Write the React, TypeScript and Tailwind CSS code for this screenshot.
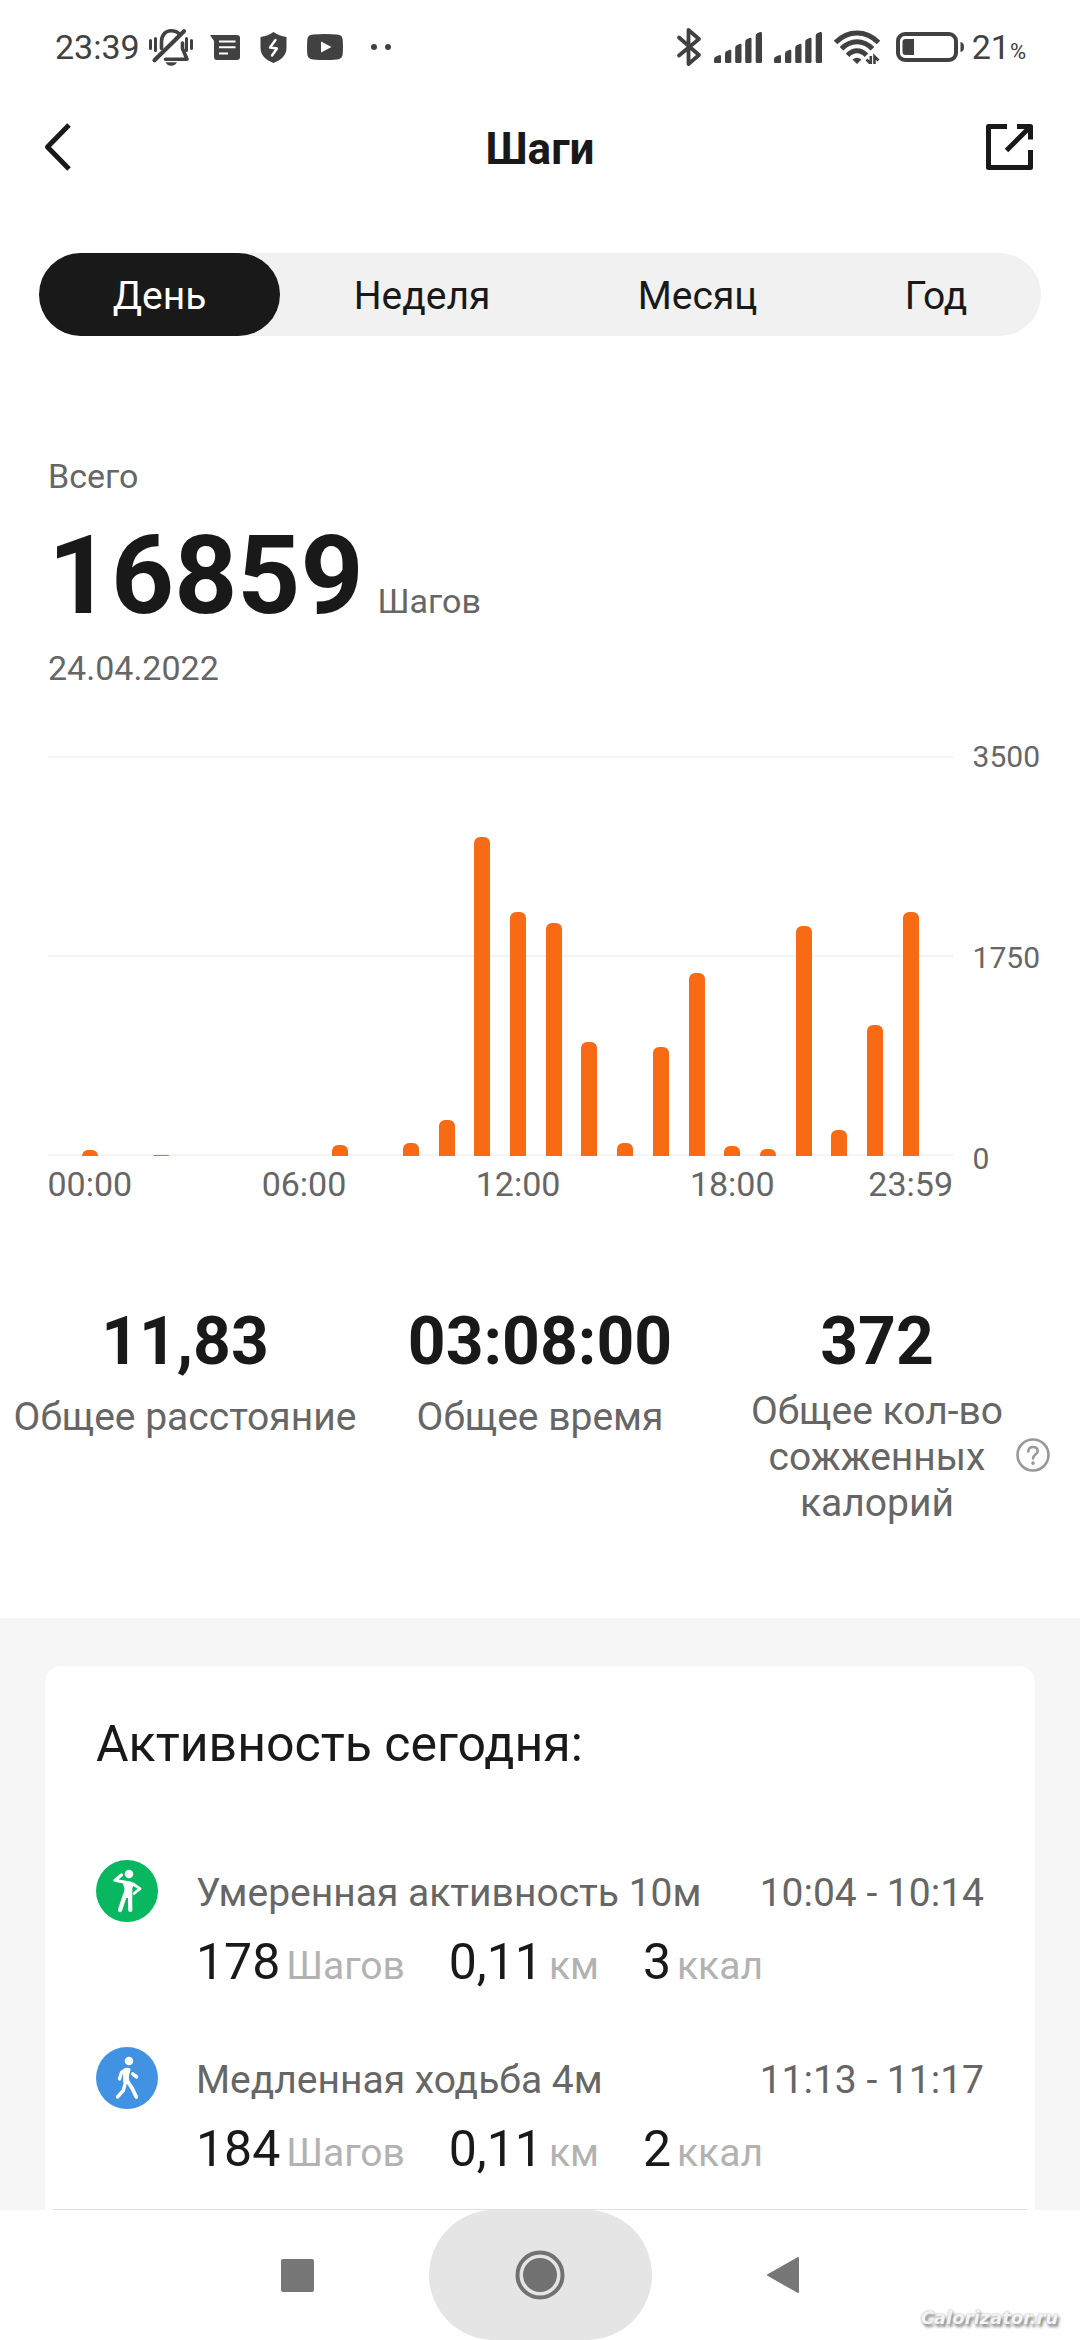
import { useState } from "react";

const tabs = ["День", "Неделя", "Месяц", "Год"];

const MAX_STEPS = 3500;

const hours = [
  53, 0, 13, 0, 0, 0, 0, 96, 0, 110, 316, 2794, 2132, 2035, 1000, 110, 956, 1605, 88, 61, 2009, 228,
  1149, 2132,
];

const hourLabels: Record<number, string> = {
  0: "00:00",
  6: "06:00",
  12: "12:00",
  18: "18:00",
  23: "23:59",
};

const activities = [
  {
    icon: StandingIcon,
    title: "Умеренная активность 10м",
    time: "10:04 - 10:14",
    values: [
      ["178", "Шагов"],
      ["0,11", "км"],
      ["3", "ккал"],
    ],
  },
  {
    icon: WalkingIcon,
    title: "Медленная ходьба 4м",
    time: "11:13 - 11:17",
    values: [
      ["184", "Шагов"],
      ["0,11", "км"],
      ["2", "ккал"],
    ],
  },
];

function StandingIcon() {
  return (
    <svg viewBox="0 0 62 62" className="size-[62px] shrink-0" aria-hidden="true">
      <circle cx="31" cy="31" r="31" fill="#07b860" />
      <circle cx="33" cy="14" r="4.3" fill="#fff" />
      <g fill="none" stroke="#fff" strokeLinecap="round" strokeLinejoin="round">
        <path d="M25.5 15 19 20.3 30 22.5" strokeWidth="3.2" />
        <path d="M37 24 44 28.7 38 33.5" strokeWidth="2.8" />
        <path d="M29 35 24 50" strokeWidth="4.2" />
        <path d="M34 35 34.3 50" strokeWidth="4.2" />
      </g>
      <path d="M26 20.5 33 21 39 23.5 36.3 28 36.2 38H26.8L28.5 29Z" fill="#fff" />
    </svg>
  );
}

function WalkingIcon() {
  return (
    <svg viewBox="0 0 62 62" className="size-[62px] shrink-0" aria-hidden="true">
      <circle cx="31" cy="31" r="31" fill="#4192e2" />
      <circle cx="33" cy="14" r="4.3" fill="#fff" />
      <g fill="none" stroke="#fff" strokeLinecap="round" strokeLinejoin="round">
        <path d="M30 22.5 25.5 25.5 23.5 32" strokeWidth="3.4" />
        <path d="M36.8 27 40.5 29.8" strokeWidth="3.6" />
        <path d="M30.5 33 36 41 40.3 50" strokeWidth="3.8" />
        <path d="M28.8 38 27.3 43.5 21.5 50" strokeWidth="3.4" />
      </g>
      <path d="M27 22.5Q32 19.5 34.6 22L32.8 30 33.5 35 28.6 38.5 27.2 35.5Z" fill="#fff" />
    </svg>
  );
}

function BellOffIcon() {
  return (
    <svg viewBox="0 0 46 40" className="h-10 w-[46px]" fill="none" stroke="currentColor" aria-hidden="true">
      <g strokeWidth="3.6" strokeLinecap="round" strokeLinejoin="round">
        <path d="M6.5 33.2 36 4.2" strokeWidth="4.2" />
        <path d="M13.5 21.5V15C13.5 8 17.5 3.8 23 3.8 26.5 3.8 29.5 5 31.5 7.2" />
        <path d="M34.5 16V21.5L39 32.2H17.5" />
      </g>
      <path d="M17.5 35.2H29Q27 38.8 23.2 38.8T17.5 35.2Z" fill="currentColor" stroke="none" />
      <path d="M2.5 13.5V21.5M7.5 11.5V23.5M38.5 11.5V23.5M43.5 13.5V21.5" strokeWidth="3" strokeLinecap="round" />
    </svg>
  );
}

function MessageIcon() {
  return (
    <svg viewBox="0 0 30 25" className="h-[25px] w-[30px]" aria-hidden="true">
      <path d="M0 0H27Q30 0 30 3V22Q30 25 27 25H7Q4 25 4 22V6Z" fill="currentColor" />
      <path d="M9 6.5H25.5M9 12.3H25.5M9 18.5H18" stroke="#fff" strokeWidth="2" />
    </svg>
  );
}

function ShieldIcon() {
  return (
    <svg viewBox="0 0 27 31" className="h-[31px] w-[27px]" aria-hidden="true">
      <path
        d="M13.5 0Q19 4 26.5 5V16C26.5 23.5 21 28 13.5 31 6 28 .5 23.5 .5 16V5Q8 4 13.5 0Z"
        fill="currentColor"
      />
      <path
        d="M15.5 8 10 15.5 17 16.5 12 23.5"
        fill="none"
        stroke="#fff"
        strokeWidth="2.4"
        strokeLinejoin="round"
        strokeLinecap="round"
      />
    </svg>
  );
}

function VideoIcon() {
  return (
    <svg viewBox="0 0 36 26" className="h-[26px] w-9" aria-hidden="true">
      <path
        d="M6 .6Q18-.4 30 .6 35.6 1 35.7 6 36.2 13 35.7 20 35.6 25 30 25.4 18 26.4 6 25.4 .4 25 .3 20-.2 13 .3 6 .4 1 6 .6Z"
        fill="currentColor"
      />
      <path d="M14 7.5 24.5 13 14 18.5Z" fill="#fff" />
    </svg>
  );
}

function BluetoothIcon() {
  return (
    <svg viewBox="0 0 26 40" className="h-10 w-[26px]" aria-hidden="true">
      <path
        d="M3 10.5 23 28 12.5 37V3L23 12 3 28.5"
        fill="none"
        stroke="currentColor"
        strokeWidth="3.8"
        strokeLinecap="round"
        strokeLinejoin="round"
      />
    </svg>
  );
}

function SignalIcon() {
  return (
    <svg viewBox="0 0 48 31" className="h-[31px] w-12" fill="currentColor" aria-hidden="true">
      <path d="M0 27Q0 25.5 2 24.5L5 23.2Q7 22.6 7 24.5V30Q7 31 6 31H1.5Q0 31 0 29.5Z" />
      <path d="M11 22Q11 20 12.5 19.2L15.5 17.8Q17.3 17.3 17.3 19V30Q17.3 31 16 31H12.5Q11 31 11 29.5Z" />
      <path d="M21.2 16Q21.2 14 22.7 13.2L25.5 12Q27.5 11.4 27.5 13V30Q27.5 31 26 31H22.7Q21.2 31 21.2 29.5Z" />
      <path d="M31.2 10Q31.2 8 32.7 7.2L35.5 6Q37.5 5.4 37.5 7V30Q37.5 31 36 31H32.7Q31.2 31 31.2 29.5Z" />
      <path d="M41.7 4Q41.7 2 43.2 1.2L46 0Q48-.4 48 1.5V30Q48 31 46.5 31H43.2Q41.7 31 41.7 29.5Z" />
    </svg>
  );
}

function WifiIcon() {
  return (
    <svg viewBox="0 0 46 34" className="h-[34px] w-[46px]" fill="none" stroke="currentColor" aria-hidden="true">
      <g strokeWidth="5">
        <path d="M1.5 12.5Q11 3 23 3T44.5 12.5" />
        <path d="M7.5 18.8Q14.5 11.8 23 11.8T38.5 18.8" />
        <path d="M13.5 25.3Q18 20.8 23 20.8T32.5 25.3" />
      </g>
      <path d="M18.5 29.5Q23 25.8 27.5 29.5L23 34Z" fill="currentColor" stroke="none" />
      <path d="M36.8 26V34L32.5 29.5M40.5 34V26.5L44.5 30.5" strokeWidth="2.6" />
    </svg>
  );
}

function BatteryIcon() {
  return (
    <svg viewBox="0 0 68 30" className="h-[30px] w-[68px]" aria-hidden="true">
      <rect x="2" y="2" width="58" height="26" rx="7" fill="none" stroke="currentColor" strokeWidth="4" />
      <path d="M9.5 7H18V23H9.5Q6.5 23 6.5 20V10Q6.5 7 9.5 7Z" fill="currentColor" />
      <path d="M64.5 10Q68 10.5 68 15T64.5 20Z" fill="currentColor" />
    </svg>
  );
}

function StatusBar() {
  return (
    <div className="flex h-[94px] items-center justify-between pr-[54px] pl-[55px] text-[34px] leading-none text-[#414141]">
      <div className="flex items-center">
        <span>23:39</span>
        <span className="ml-2">
          <BellOffIcon />
        </span>
        <span className="ml-4">
          <MessageIcon />
        </span>
        <span className="ml-5">
          <ShieldIcon />
        </span>
        <span className="ml-5">
          <VideoIcon />
        </span>
        <span className="ml-7 flex gap-2">
          <i className="size-[6px] rounded-full bg-current" />
          <i className="size-[6px] rounded-full bg-current" />
        </span>
      </div>
      <div className="flex items-center gap-3">
        <BluetoothIcon />
        <SignalIcon />
        <SignalIcon />
        <WifiIcon />
        <span className="ml-1">
          <BatteryIcon />
        </span>
        <span className="-ml-1 flex items-baseline">
          21<span className="text-[22px]">%</span>
        </span>
      </div>
    </div>
  );
}

function Header() {
  return (
    <header className="grid h-[106px] grid-cols-[1fr_auto_1fr] items-center px-11">
      <button type="button" aria-label="Назад" className="justify-self-start">
        <svg viewBox="0 0 28 48" className="h-12 w-7" fill="none" stroke="#191919" strokeWidth="5" strokeLinejoin="round">
          <path d="M25 2 3.5 24 25 46" />
        </svg>
      </button>
      <h1 className="pt-1 text-[44px] leading-none font-bold">Шаги</h1>
      <button type="button" aria-label="Поделиться" className="justify-self-end">
        <svg viewBox="0 0 52 48" className="h-12 w-[52px]" fill="none" stroke="#191919" strokeWidth="5" strokeLinejoin="round">
          <path d="M23 3.5H4.5V44.5H46.5V27" />
          <path d="M33 3.5H46.5V16.5" />
          <path d="M46 4 22.5 27.5" />
        </svg>
      </button>
    </header>
  );
}

function StepsChart() {
  return (
    <div className="flex pr-10 pl-12">
      <div className="flex-1">
        <div className="relative h-[400px]">
          <div className="absolute inset-0 flex flex-col justify-between">
            <div className="h-[2px] bg-[#f4f4f4]" />
            <div className="h-[2px] bg-[#f4f4f4]" />
            <div className="h-[2px] bg-[#f4f4f4]" />
          </div>
          <div className="relative grid h-full grid-cols-24 px-6">
            {hours.map((steps, i) => (
              <div key={i} className="flex items-end justify-center">
                <div
                  className="w-4 rounded-t-md bg-[#f96a14]"
                  style={{ height: `${(steps / MAX_STEPS) * 100}%` }}
                />
              </div>
            ))}
          </div>
        </div>
        <div className="mt-2 grid grid-cols-24 px-6 text-[34px] leading-10 text-[#666]">
          {hours.map((_, i) => (
            <div key={i} className="flex w-full justify-center">
              {hourLabels[i] && <span className="-mx-12">{hourLabels[i]}</span>}
            </div>
          ))}
        </div>
      </div>
      <div className="ml-5 flex h-[402px] flex-col justify-between text-[30px] text-[#666]">
        {["3500", "1750", "0"].map((label) => (
          <span key={label} className="flex h-0 items-center">
            {label}
          </span>
        ))}
      </div>
    </div>
  );
}

function Stat({ value, label, className }: { value: string; label: string; className: string }) {
  return (
    <div className="text-center">
      <p className="text-[66px] leading-[76px] font-bold">{value}</p>
      <p className={`text-[39px] leading-[46px] text-[#666] ${className}`}>{label}</p>
    </div>
  );
}

export default function App() {
  const [tab, setTab] = useState(tabs[0]);

  return (
    <div className="relative flex min-h-screen flex-col bg-white font-[Roboto,sans-serif] text-[#191919]">
      <StatusBar />
      <Header />

      <nav className="mx-[39px] mt-[53px] flex h-[83px] rounded-full bg-[#f1f1f1]">
        {tabs.map((t) => (
          <button
            key={t}
            type="button"
            onClick={() => setTab(t)}
            className={
              t === tab
                ? "flex-auto rounded-full bg-[#191919] pt-1 text-[39px] text-white"
                : "flex-auto rounded-full pt-1 text-[39px]"
            }
          >
            {t}
          </button>
        ))}
      </nav>

      <section className="mt-[120px] mb-[68px] px-12 text-[34px] leading-10 text-[#666]">
        <p>Всего</p>
        <p className="mt-4 flex items-baseline gap-3.5">
          <strong className="text-[110px] leading-[128px] font-bold text-[#191919]">16859</strong>
          Шагов
        </p>
        <p className="mt-2">24.04.2022</p>
      </section>

      <StepsChart />

      <section className="mt-[100px] grid grid-cols-[370fr_340fr_334fr_36fr] pb-[92px]">
        <Stat value="11,83" label="Общее расстояние" className="pt-3.5" />
        <Stat value="03:08:00" label="Общее время" className="pt-3.5" />
        <Stat value="372" label="Общее кол-во сожженных калорий" className="px-9 pt-2" />
        <button type="button" aria-label="Справка" className="-ml-7 self-start pt-[134px]">
          <svg viewBox="0 0 34 34" className="size-[34px]" fill="none" stroke="#999" strokeWidth="2.6" strokeLinecap="round">
            <circle cx="17" cy="17" r="15.5" />
            <path d="M12.3 13.5Q12.5 9 17 9T21.7 13.2C21.7 16.5 17 16.5 17 20.5" />
            <path d="M17 25V25.2" strokeWidth="3.4" />
          </svg>
        </button>
      </section>

      <section className="flex flex-1 flex-col bg-[#f6f6f6] px-[45px] pt-12">
        <div className="flex flex-1 flex-col rounded-t-2xl bg-white">
          <div className="flex-1 px-[51px] pt-12 pb-7">
            <h2 className="text-[50px] leading-[60px]">Активность сегодня:</h2>
            <ul className="mt-[86px] space-y-[55px]">
              {activities.map((a) => (
                <li key={a.title} className="flex gap-[38px]">
                  <a.icon />
                  <div className="flex-1 pt-2.5">
                    <div className="flex justify-between text-[39px] leading-[46px] text-[#666]">
                      <span>{a.title}</span>
                      <span>{a.time}</span>
                    </div>
                    <div className="mt-4 flex gap-11 text-[50px] leading-[60px]">
                      {a.values.map(([value, unit]) => (
                        <span key={unit}>
                          {value}
                          <span className="ml-1.5 text-[39px] leading-none text-[#b2b2b2]">{unit}</span>
                        </span>
                      ))}
                    </div>
                  </div>
                </li>
              ))}
            </ul>
          </div>
          <div className="mx-2 h-px bg-[#dedede]" />
        </div>
      </section>

      <nav className="flex h-[130px] justify-center gap-5">
        <button type="button" aria-label="Недавние" className="flex w-[223px] items-center justify-center">
          <span className="size-[33px] rounded-xs bg-[#777]" />
        </button>
        <button
          type="button"
          aria-label="Домой"
          className="flex w-[223px] items-center justify-center rounded-full bg-[#e5e5e5]"
        >
          <svg viewBox="0 0 50 50" className="size-[50px]">
            <circle cx="25" cy="25" r="22.5" fill="none" stroke="#717171" strokeWidth="4" />
            <circle cx="25" cy="25" r="17" fill="#717171" />
          </svg>
        </button>
        <button type="button" aria-label="Назад" className="flex w-[223px] items-center justify-center">
          <svg viewBox="0 0 34 38" className="h-[38px] w-[34px]">
            <path d="M32 2V36L2 19Z" fill="#777" stroke="#777" strokeWidth="2" strokeLinejoin="round" />
          </svg>
        </button>
      </nav>

      <span className="absolute right-[22px] bottom-2 font-['DejaVu_Sans',sans-serif] text-[18px] leading-7 font-bold text-[#f4f4f4] italic [text-shadow:0_0_2px_#999,2px_3px_3px_#888]">
        Calorizator.ru
      </span>
    </div>
  );
}
